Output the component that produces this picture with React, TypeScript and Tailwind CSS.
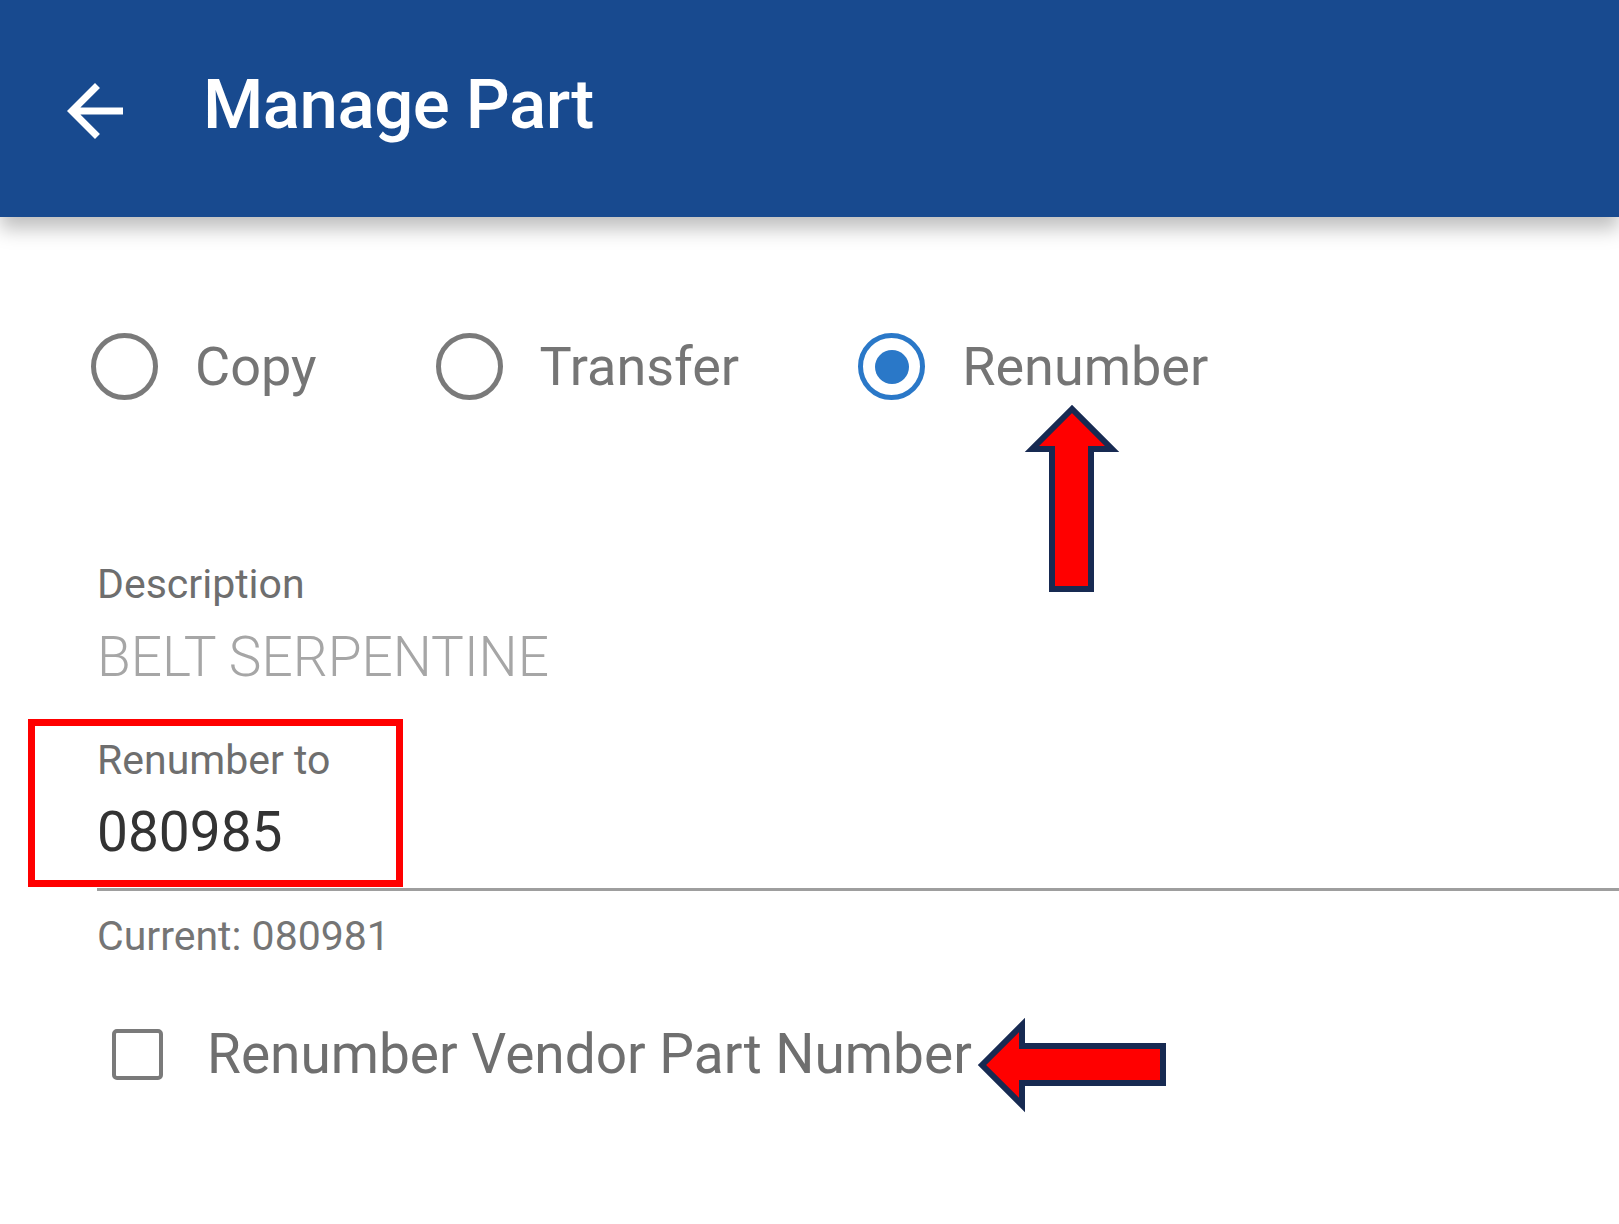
import React from 'react'

function BackArrow() {
  return (
    <svg width="84" height="84" viewBox="0 0 24 24" fill="white">
      <path d="M20 11H7.83l5.59-5.59L12 4l-8 8 8 8 1.41-1.41L7.83 13H20v-2z" />
    </svg>
  )
}

function Radio({ label, checked }: { label: string; checked?: boolean }) {
  return (
    <label className="flex items-center gap-[37px]">
      <span
        className={`flex items-center justify-center w-[67px] h-[67px] rounded-full border-[5px] ${
          checked ? 'border-[#2a78c8]' : 'border-[#7a7a7a]'
        }`}
      >
        {checked && <span className="w-[34px] h-[34px] rounded-full bg-[#2a78c8]" />}
      </span>
      <span className="text-[54px] leading-[62px] text-[#757575]">{label}</span>
    </label>
  )
}

export default function App() {
  return (
    <div className="relative w-full min-h-[1224px] bg-white overflow-hidden" style={{ fontFamily: 'Roboto, "Noto Sans", sans-serif' }}>
      {/* app bar */}
      <header className="relative z-10 h-[217px] bg-[#184a8f] flex items-center shadow-[0_12px_18px_rgba(0,0,0,0.25)]">
        <div className="ml-[53px] mt-[4px]">
          <BackArrow />
        </div>
        <h1 className="ml-[66px] mb-[8px] text-[69px] leading-none font-medium text-white tracking-[-0.5px]">Manage Part</h1>
      </header>

      {/* mode selector */}
      <div className="flex items-center gap-[119px] pl-[91px] mt-[116px]">
        <Radio label="Copy" />
        <Radio label="Transfer" />
        <Radio label="Renumber" checked />
      </div>

      {/* fields */}
      <div className="pl-[97px] mt-[160px]">
        <div className="text-[41px] leading-[48px] text-[#6e6e6e]">Description</div>
        <div className="text-[55px] leading-[62px] text-[#a6a6a6] font-light mt-[18px]">BELT SERPENTINE</div>

        <div className="relative mt-[48px]">
          <div className="text-[41px] leading-[48px] text-[#6e6e6e]">Renumber to</div>
          <div className="text-[55px] leading-[62px] text-[#333333] mt-[17px]">080985</div>
          <div className="h-[3px] bg-[#9e9e9e] mt-[25px]" />
          <div className="text-[41px] leading-[48px] text-[#757575] mt-[21px]">Current: 080981</div>
          {/* highlight box */}
          <div className="absolute left-[-69px] top-[-17px] w-[375px] h-[168px] border-[7px] border-[#ff0000]" />
        </div>

        <label className="flex items-center gap-[44px] ml-[15px] mt-[63px]">
          <span className="w-[51px] h-[51px] rounded-[5px] border-[4px] border-[#7a7a7a]" />
          <span className="text-[55px] leading-[62px] text-[#6f6f6f]">Renumber Vendor Part Number</span>
        </label>
      </div>

      {/* annotation arrows */}
      <svg className="absolute left-0 top-0 pointer-events-none" width="1619" height="1224">
        <polygon
          points="1072,409 1032,449 1052,449 1052,589 1091,589 1091,449 1112,449"
          fill="#ff0000"
          stroke="#172a52"
          strokeWidth="6"
          strokeLinejoin="miter"
        />
        <polygon
          points="982,1065 1022,1025 1022,1046 1163,1046 1163,1083 1022,1083 1022,1105"
          fill="#ff0000"
          stroke="#172a52"
          strokeWidth="6"
          strokeLinejoin="miter"
        />
      </svg>
    </div>
  )
}
